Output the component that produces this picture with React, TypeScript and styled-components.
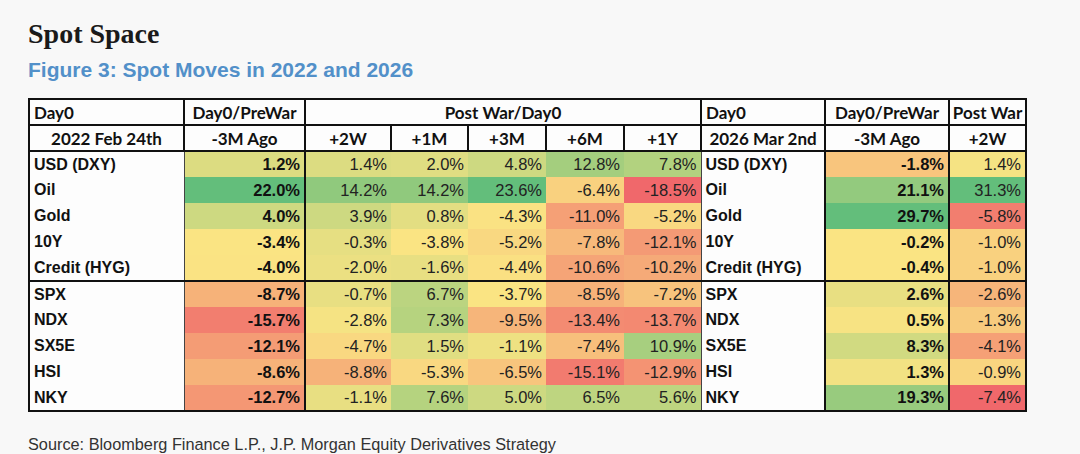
import styled, { createGlobalStyle, css } from 'styled-components';

const GlobalStyle = createGlobalStyle`
  body {
    margin: 0;
    background: #f8f8f8;
  }
`;

type Cell = [string, number];

interface Row {
  label: string;
  pre: Cell;
  post: Cell[];
  pre26: Cell;
  post26: Cell;
  groupEnd?: boolean;
}

const rows: Row[] = [
  { label: 'USD (DXY)', pre: ['1.2%', 0.2], post: [['1.4%', 0.2], ['2.0%', 0.18], ['4.8%', 0.3], ['12.8%', 0.57], ['7.8%', 0.48]], pre26: ['-1.8%', -0.25], post26: ['1.4%', 0.03] },
  { label: 'Oil', pre: ['22.0%', 1], post: [['14.2%', 0.7], ['14.2%', 0.7], ['23.6%', 1], ['-6.4%', -0.15], ['-18.5%', -1]], pre26: ['21.1%', 0.68], post26: ['31.3%', 1] },
  { label: 'Gold', pre: ['4.0%', 0.3], post: [['3.9%', 0.3], ['0.8%', 0.15], ['-4.3%', -0.02], ['-11.0%', -0.55], ['-5.2%', -0.1]], pre26: ['29.7%', 1], post26: ['-5.8%', -0.82] },
  { label: '10Y', pre: ['-3.4%', 0], post: [['-0.3%', 0.13], ['-3.8%', 0], ['-5.2%', -0.1], ['-7.8%', -0.35], ['-12.1%', -0.6]], pre26: ['-0.2%', 0], post26: ['-1.0%', -0.15] },
  { label: 'Credit (HYG)', pre: ['-4.0%', -0.01], post: [['-2.0%', 0.1], ['-1.6%', 0.12], ['-4.4%', -0.03], ['-10.6%', -0.52], ['-10.2%', -0.47]], pre26: ['-0.4%', 0], post26: ['-1.0%', -0.15], groupEnd: true },
  { label: 'SPX', pre: ['-8.7%', -0.4], post: [['-0.7%', 0.12], ['6.7%', 0.42], ['-3.7%', 0], ['-8.5%', -0.4], ['-7.2%', -0.27]], pre26: ['2.6%', 0.12], post26: ['-2.6%', -0.38] },
  { label: 'NDX', pre: ['-15.7%', -0.82], post: [['-2.8%', 0.03], ['7.3%', 0.45], ['-9.5%', -0.38], ['-13.4%', -0.72], ['-13.7%', -0.73]], pre26: ['0.5%', 0.02], post26: ['-1.3%', -0.2] },
  { label: 'SX5E', pre: ['-12.1%', -0.58], post: [['-4.7%', -0.1], ['1.5%', 0.17], ['-1.1%', 0.08], ['-7.4%', -0.3], ['10.9%', 0.55]], pre26: ['8.3%', 0.27], post26: ['-4.1%', -0.55] },
  { label: 'HSI', pre: ['-8.6%', -0.4], post: [['-8.8%', -0.4], ['-5.3%', -0.1], ['-6.5%', -0.25], ['-15.1%', -0.85], ['-12.9%', -0.65]], pre26: ['1.3%', 0.05], post26: ['-0.9%', -0.12] },
  { label: 'NKY', pre: ['-12.7%', -0.62], post: [['-1.1%', 0.12], ['7.6%', 0.46], ['5.0%', 0.3], ['6.5%', 0.4], ['5.6%', 0.4]], pre26: ['19.3%', 0.65], post26: ['-7.4%', -1] },
];

const RED = [240, 104, 107];
const YELLOW = [250, 228, 131];
const GREEN = [99, 190, 123];

// excel style 3 colour scale
const heat = (t: number) => {
  const to = t >= 0 ? GREEN : RED;
  const k = Math.abs(t);
  const c = YELLOW.map((y, i) => Math.round(y + (to[i] - y) * k));
  return `rgb(${c.join(',')})`;
};

const THICK = '2px solid #111';
const THIN = '1px solid #444';

type Edge = 'none' | 'thin' | 'thick';
const edge = (e?: Edge) => (e === 'thick' ? THICK : e === 'thin' ? THIN : 'none');

const Page = styled.div`
  padding: 18px 0 0 28px;
`;

const Heading = styled.h1`
  margin: 0;
  font-family: 'Liberation Serif', serif;
  font-weight: bold;
  font-size: 28px;
  line-height: 32px;
  color: #1a1a1a;
`;

const FigureTitle = styled.h2`
  margin: 7px 0 0;
  font-family: 'Liberation Sans', Arial, sans-serif;
  font-weight: bold;
  font-size: 21px;
  line-height: 26px;
  color: #5290c9;
`;

const Table = styled.table`
  margin-top: 15px;
  border-collapse: collapse;
  table-layout: fixed;
  width: 997px;
  border: ${THICK};
  color: #111;
`;

const HeadCell = styled.th<{ $align?: 'left' | 'center' }>`
  height: 24px;
  padding: ${(p) => (p.$align === 'left' ? '0 2px 0 4px' : '0 1px')};
  background: #fdfdfd;
  border: ${THICK};
  font-family: Lato, 'Liberation Sans', sans-serif;
  font-weight: bold;
  font-size: 17px;
  text-align: ${(p) => p.$align || 'center'};
  white-space: nowrap;
  overflow: hidden;
`;

const DataRow = styled.tr<{ $groupEnd?: boolean }>`
  height: 26px;
  ${(p) =>
    p.$groupEnd &&
    css`
      border-bottom: ${THICK};
    `}
`;

const Label = styled.td<{ $left?: Edge; $right?: Edge }>`
  padding: 0 4px;
  background: #fdfdfd;
  border-left: ${(p) => edge(p.$left)};
  border-right: ${(p) => edge(p.$right)};
  font-family: 'Liberation Sans', Arial, sans-serif;
  font-weight: bold;
  font-size: 16px;
  white-space: nowrap;
`;

const Value = styled.td<{ $t: number; $bold?: boolean; $right?: Edge }>`
  padding: 0 4px 0 0;
  background: ${(p) => heat(p.$t)};
  border-right: ${(p) => edge(p.$right)};
  font-family: 'Liberation Sans', Arial, sans-serif;
  font-weight: ${(p) => (p.$bold ? 'bold' : 'normal')};
  font-size: 16.5px;
  color: ${(p) => (p.$bold ? '#111' : '#222')};
  text-align: right;
  white-space: nowrap;
`;

const Source = styled.p`
  margin: 22px 0 0;
  font-family: 'Liberation Sans', Arial, sans-serif;
  font-size: 16.3px;
  line-height: 20px;
  color: #333;
`;

const widths = [155, 121, 86, 77, 78, 78, 77, 124, 124, 77];

export default function App() {
  return (
    <Page>
      <GlobalStyle />
      <Heading>Spot Space</Heading>
      <FigureTitle>Figure 3: Spot Moves in 2022 and 2026</FigureTitle>
      <Table>
        <colgroup>
          {widths.map((w, i) => (
            <col key={i} style={{ width: w }} />
          ))}
        </colgroup>
        <thead>
          <tr>
            <HeadCell $align="left">Day0</HeadCell>
            <HeadCell>Day0/PreWar</HeadCell>
            <HeadCell colSpan={5}>Post War/Day0</HeadCell>
            <HeadCell $align="left">Day0</HeadCell>
            <HeadCell>Day0/PreWar</HeadCell>
            <HeadCell>Post War</HeadCell>
          </tr>
          <tr>
            <HeadCell>2022 Feb 24th</HeadCell>
            <HeadCell>-3M Ago</HeadCell>
            <HeadCell>+2W</HeadCell>
            <HeadCell>+1M</HeadCell>
            <HeadCell>+3M</HeadCell>
            <HeadCell>+6M</HeadCell>
            <HeadCell>+1Y</HeadCell>
            <HeadCell>2026 Mar 2nd</HeadCell>
            <HeadCell>-3M Ago</HeadCell>
            <HeadCell>+2W</HeadCell>
          </tr>
        </thead>
        <tbody>
          {rows.map((r) => (
            <DataRow key={r.label} $groupEnd={r.groupEnd}>
              <Label $left="thick" $right="thin">
                {r.label}
              </Label>
              <Value $t={r.pre[1]} $bold $right="thick">
                {r.pre[0]}
              </Value>
              {r.post.map(([v, t], i) => (
                <Value key={i} $t={t} $right={i === 4 ? 'thin' : 'none'}>
                  {v}
                </Value>
              ))}
              <Label $left="thin" $right="thick">
                {r.label}
              </Label>
              <Value $t={r.pre26[1]} $bold $right="thick">
                {r.pre26[0]}
              </Value>
              <Value $t={r.post26[1]} $right="thick">
                {r.post26[0]}
              </Value>
            </DataRow>
          ))}
        </tbody>
      </Table>
      <Source>Source: Bloomberg Finance L.P., J.P. Morgan Equity Derivatives Strategy</Source>
    </Page>
  );
}
